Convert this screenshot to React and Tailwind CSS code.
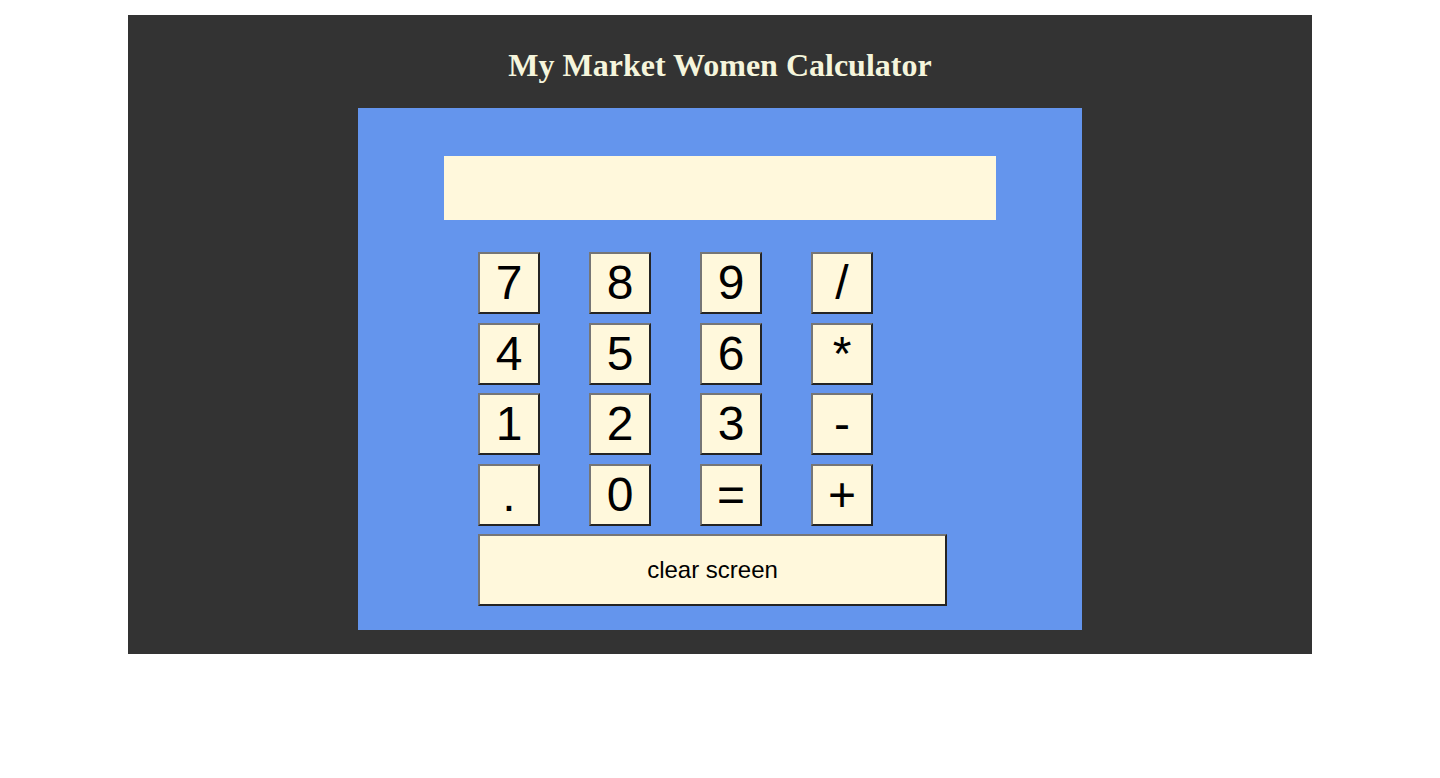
import React from "react";

const keys = ["7", "8", "9", "/", "4", "5", "6", "*", "1", "2", "3", "-", ".", "0", "=", "+"];

const btnBorder =
  "border-2 border-t-[#767676] border-l-[#767676] border-b-[#242424] border-r-[#242424] bg-[#fff8dc] text-black";

export default function App() {
  return (
    <div className="w-full bg-white pt-[15px] pb-[124px]">
      <div className="mx-auto w-[1184px] bg-[#333333] pt-[32px] pb-[24px] flex flex-col items-center">
        <h1
          className="text-[32px] leading-[37px] h-[37px] font-bold text-[#f5f5dc] text-center"
          style={{ fontFamily: '"Liberation Serif", "Times New Roman", serif' }}
        >
          My Market Women Calculator
        </h1>
        <div className="mt-[24px] w-[724px] bg-[#6495ed] pt-[48px] pb-[24px] flex flex-col">
          <div className="mx-auto w-[552px] h-[64px] bg-[#fff8dc]" />
          <div className="ml-[120px] mt-[32px] grid grid-cols-[62px_62px_62px_62px] gap-x-[49px] gap-y-[8.5px]">
            {keys.map((k) => (
              <button
                key={k}
                className={`${btnBorder} w-[62px] h-[62px] flex items-center justify-center text-[48px] leading-none`}
                style={{ fontFamily: '"Liberation Sans", Arial, sans-serif' }}
              >
                {k}
              </button>
            ))}
          </div>
          <button
            className={`${btnBorder} ml-[120px] mt-[8.5px] w-[469px] h-[72px] flex items-center justify-center text-[24px] leading-none`}
            style={{ fontFamily: '"Liberation Sans", Arial, sans-serif' }}
          >
            clear screen
          </button>
        </div>
      </div>
    </div>
  );
}
